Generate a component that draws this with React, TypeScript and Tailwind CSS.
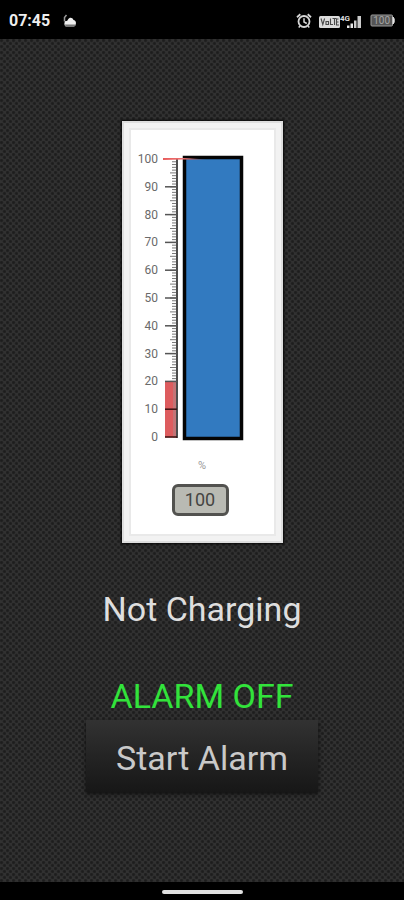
const LEVELS = [100, 90, 80, 70, 60, 50, 40, 30, 20, 10, 0];
const MINOR = Array.from({ length: 80 }, (_, i) => i + 20);

const scaleY = (level: number) => 316 - level * 2.78;

function CloudIcon() {
  return (
    <svg className="h-4 w-4" viewBox="0 0 16 16" aria-hidden="true">
      <path d="M1.500 8.500V4.500L3.500 2" stroke="#999" strokeWidth="1.500" fill="none" />
      <path d="M3 13.500C1 13 1 9 2.500 8C4 8 4.500 7.500 5 6.500C6.500 4 9.500 4.500 10.500 7C13 7.500 13.500 10 12.500 12C12 13.500 11 13.500 10 13.500Z" fill="#eee" />
      <path d="M2 11.500h10.800c-.5 1.500-1 2-2.300 2H3.500C2.500 13.500 2 12.800 2 11.500Z" fill="#777" />
    </svg>
  );
}

function AlarmIcon() {
  return (
    <svg className="h-4 w-4" viewBox="0 0 16 16" fill="none" stroke="#d6d6d6" aria-hidden="true">
      <circle cx="8" cy="8.500" r="5.500" strokeWidth="1.800" />
      <path d="M1 4.200 4.300 1.300M15 4.200 11.700 1.300" strokeWidth="1.800" />
      <path d="M8 5.300V9l2.800 1.500" strokeWidth="1.500" />
      <path d="M4 13l-1.300 1.500M12 13l1.300 1.500" strokeWidth="1.500" />
    </svg>
  );
}

function SignalIcon() {
  return (
    <svg className="h-4 w-[46px]" viewBox="0 0 46 16" role="img" aria-label="VoLTE 4G signal">
      <rect x="1" y="3" width="21" height="12" rx="1.500" fill="#dcdcdc" />
      <path d="M3 5.500l1.800 6 1.800-6M8 8.500h2.500v3H8zM12.500 5.500v6h2.500M14.500 5.500h4M16.500 5.500v6.500M20.500 6H18.500v6h2.500M18.500 9h2" fill="none" stroke="#4a4a4a" strokeWidth="1.100" />
      <text x="22" y="8" fontSize="8" fontWeight="700" fill="#ddd">4G</text>
      <path d="M29 12.500h2.500V15H29zM32.500 10.500H35V15h-2.500z" fill="#e8e8e8" />
      <path d="M36 7.500h2.500V15H36zM39.500 3H43v12h-3.500z" fill="#cbcbcb" />
    </svg>
  );
}

function BatteryIcon() {
  return (
    <svg className="h-4 w-[26px]" viewBox="0 0 26 16" role="img" aria-label="Battery 100%">
      <rect x="1" y="2" width="21.500" height="11" rx="1" fill="#555" stroke="#9c9c9c" />
      <path d="M23 4c1.800 1 1.800 6 0 7z" fill="#eee" stroke="#ddd" />
      <text x="11.700" y="11" textAnchor="middle" fontSize="10" fill="#a4a4a4">100</text>
    </svg>
  );
}

function Gauge() {
  return (
    <section
      aria-label="Battery level"
      className="flex w-[161px] flex-col items-center border-2 border-[#dedede] bg-white pb-[25px] shadow-[inset_0_0_0_5px_#f2f2f2,inset_0_0_0_7px_#e9e9e9,0_0_2px_1px_#080808]"
    >
      <svg className="-mt-[2px] h-[322px] w-[161px]" viewBox="0 0 161 322" role="img" aria-label="100 percent">
        <defs>
          <linearGradient id="marker" x1="0" x2="1">
            <stop offset="0" stopColor="#e85c5c" />
            <stop offset=".6" stopColor="#ef7777" />
            <stop offset="1" stopColor="#ef7777" stopOpacity="0" />
          </linearGradient>
        </defs>
        {MINOR.map((n) => (
          <path key={n} d={`M${n % 5 ? 50 : 48} ${scaleY(n)}H54`} stroke="#777" strokeWidth="1" />
        ))}
        <rect x="43" y={scaleY(20)} width="12" height="56" fill="#dd5c5e" />
        <rect x="51" y={scaleY(20)} width="3" height="56" fill="#c47476" />
        <path d="M55 38V317" stroke="#4c4c4c" strokeWidth="2" />
        {LEVELS.map((n) => (
          <g key={n}>
            {n < 100 && (
              <path d={`M43 ${scaleY(n)}H55`} stroke={n <= 10 ? "#3a1111" : "#555"} strokeWidth="1.500" />
            )}
            <text x="36" y={scaleY(n) + 4} textAnchor="end" fontSize="12" fill="#6a6a6a">{n}</text>
          </g>
        ))}
        <rect x="62.500" y="36.500" width="57" height="281" fill="#327ac0" stroke="#050505" strokeWidth="3.500" />
        <path d="M41 37H61L86 38.500H61L41 39Z" fill="url(#marker)" />
      </svg>
      <span className="mt-[15px] text-[11px] leading-4 text-[#999]">%</span>
      <output className="mt-[10px] mr-1 flex h-8 w-[57px] items-center justify-center rounded-md border-[3px] border-[#52524f] bg-[#b9bab3] text-lg leading-6 text-[#454542]">
        100
      </output>
    </section>
  );
}

export default function App() {
  return (
    <div className="flex min-h-screen flex-col bg-black font-[Roboto,sans-serif]">
      <header className="flex h-[39px] items-center justify-between pt-[2px] pr-2 pl-[9px]">
        <div className="flex items-center gap-[13px]">
          <time className="text-base leading-5 font-bold text-[#eee]">07:45</time>
          <CloudIcon />
        </div>
        <div className="flex items-center gap-[6px]">
          <AlarmIcon />
          <SignalIcon />
          <BatteryIcon />
        </div>
      </header>
      <main className="flex grow flex-col items-center bg-[#313131] bg-[radial-gradient(circle_at_25%_25%,#1d1d1d_0,#1d1d1d_12%,transparent_36%),radial-gradient(circle_at_75%_75%,#1d1d1d_0,#1d1d1d_12%,transparent_36%)] bg-[size:6px_6px] pt-[82px]">
        <Gauge />
        <p className="mt-[46px] text-[34px] leading-10 text-[#dedede]">Not Charging</p>
        <p className="mt-[47px] text-[34px] leading-10 text-[#32e33b]">ALARM OFF</p>
        <button
          type="button"
          className="mt-1 h-[72px] w-[232px] bg-linear-to-b from-[#323232] to-[#171717] pt-1 text-[34px] leading-10 text-[#c9c9c9] shadow-[0_2px_4px_#111]"
        >
          Start Alarm
        </button>
      </main>
      <footer className="flex h-[18px] items-center justify-center">
        <div className="mt-[2px] h-1 w-[81px] rounded-sm bg-[#e2e2e2]" />
      </footer>
    </div>
  );
}
